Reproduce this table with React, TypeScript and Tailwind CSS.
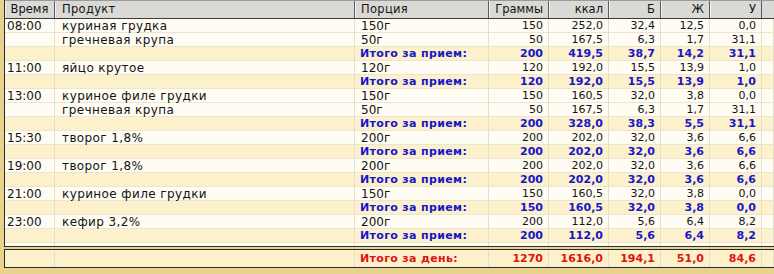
import clsx from 'clsx';

type Row = {
  time?: string;
  product?: string;
  portion?: string;
  values: string[];
  total?: boolean;
};

const rows: Row[] = [
  { time: '08:00', product: 'куриная грудка', portion: '150г', values: ['150', '252,0', '32,4', '12,5', '0,0'] },
  { product: 'гречневая крупа', portion: '50г', values: ['50', '167,5', '6,3', '1,7', '31,1'] },
  { total: true, values: ['200', '419,5', '38,7', '14,2', '31,1'] },
  { time: '11:00', product: 'яйцо крутое', portion: '120г', values: ['120', '192,0', '15,5', '13,9', '1,0'] },
  { total: true, values: ['120', '192,0', '15,5', '13,9', '1,0'] },
  { time: '13:00', product: 'куриное филе грудки', portion: '150г', values: ['150', '160,5', '32,0', '3,8', '0,0'] },
  { product: 'гречневая крупа', portion: '50г', values: ['50', '167,5', '6,3', '1,7', '31,1'] },
  { total: true, values: ['200', '328,0', '38,3', '5,5', '31,1'] },
  { time: '15:30', product: 'творог 1,8%', portion: '200г', values: ['200', '202,0', '32,0', '3,6', '6,6'] },
  { total: true, values: ['200', '202,0', '32,0', '3,6', '6,6'] },
  { time: '19:00', product: 'творог 1,8%', portion: '200г', values: ['200', '202,0', '32,0', '3,6', '6,6'] },
  { total: true, values: ['200', '202,0', '32,0', '3,6', '6,6'] },
  { time: '21:00', product: 'куриное филе грудки', portion: '150г', values: ['150', '160,5', '32,0', '3,8', '0,0'] },
  { total: true, values: ['150', '160,5', '32,0', '3,8', '0,0'] },
  { time: '23:00', product: 'кефир 3,2%', portion: '200г', values: ['200', '112,0', '5,6', '6,4', '8,2'] },
  { total: true, values: ['200', '112,0', '5,6', '6,4', '8,2'] },
];

const cols = 'grid grid-cols-[50px_300px_134px_60px_60px_52px_49px_52px_1fr]';
const cell = 'border-r border-[#e4dfcb] whitespace-nowrap';
const headCell =
  'h-[17px] leading-[17px] border-r border-r-[#5a5a5a] shadow-[inset_1px_0_0_#f4f4f4] bg-[#d9d9d6] overflow-hidden whitespace-nowrap text-[11.5px]';

const App = () => {
  return (
    <div
      className="h-[274px] w-[774px] overflow-hidden bg-[#e8d38e] pl-[4px] text-[11px] text-[#141414]"
      style={{ fontFamily: '"DejaVu Sans", Verdana, sans-serif' }}
    >
      <div className="border-b border-l border-[#2a2a2a] bg-[#fffcf3]">
        <div className={clsx(cols, 'border-b border-t border-b-[#3a3a3a] border-t-[#9a9a9a]')}>
          <div className={clsx(headCell, 'text-center')}>Время</div>
          <div className={clsx(headCell, 'pl-[7px] tracking-[0.3px]')}>Продукт</div>
          <div className={clsx(headCell, 'pl-[6px] tracking-[0.3px]')}>Порция</div>
          <div className={clsx(headCell, 'pr-[5px] text-right')}>Граммы</div>
          <div className={clsx(headCell, 'pr-[5px] text-right')}>ккал</div>
          <div className={clsx(headCell, 'pr-[5px] text-right')}>Б</div>
          <div className={clsx(headCell, 'pr-[5px] text-right')}>Ж</div>
          <div className={clsx(headCell, 'pr-[5px] text-right')}>У</div>
          <div className="h-[17px] bg-[#d9d9d6]" />
        </div>
        {rows.map((r, i) => (
          <div
            key={i}
            className={clsx(
              cols,
              'h-[14px] border-b border-[#ece6d0] leading-[14px]',
              r.total ? 'bg-[#fcf1cb] font-bold text-[#1616cc]' : 'bg-[#fffcf3]',
            )}
          >
            <div className={clsx(cell, 'pl-[2px] text-[12px] font-normal')}>{r.time}</div>
            <div className={clsx(cell, 'pl-[7px] text-[12px] font-normal tracking-[0.4px] text-[#141414]')}>
              {r.product}
            </div>
            <div className={clsx(cell, r.total ? 'pl-[5px] tracking-[0.35px]' : 'pl-[6px] text-[12px]')}>
              {r.total ? 'Итого за прием:' : r.portion}
            </div>
            {r.values.map((v, j) => (
              <div key={j} className={clsx(cell, 'pr-[5px] text-right')}>
                {v}
              </div>
            ))}
            <div className={cell} />
          </div>
        ))}
        <div className={clsx(cols, 'h-[3px]')}>
          {Array.from({ length: 9 }).map((_, i) => (
            <div key={i} className={cell} />
          ))}
        </div>
      </div>
      <div className="mt-[2px] border-b border-l border-t border-[#2a2a2a] bg-[#fcf1cb]">
        <div className={clsx(cols, 'h-[17px] leading-[17px] font-bold text-[#e01212]')}>
          <div className={cell} />
          <div className={cell} />
          <div className={clsx(cell, 'pl-[5px] tracking-[0.35px]')}>Итого за день:</div>
          {['1270', '1616,0', '194,1', '51,0', '84,6'].map((v, j) => (
            <div key={j} className={clsx(cell, 'pr-[5px] text-right')}>
              {v}
            </div>
          ))}
          <div className={cell} />
        </div>
      </div>
    </div>
  );
};

export default App;
